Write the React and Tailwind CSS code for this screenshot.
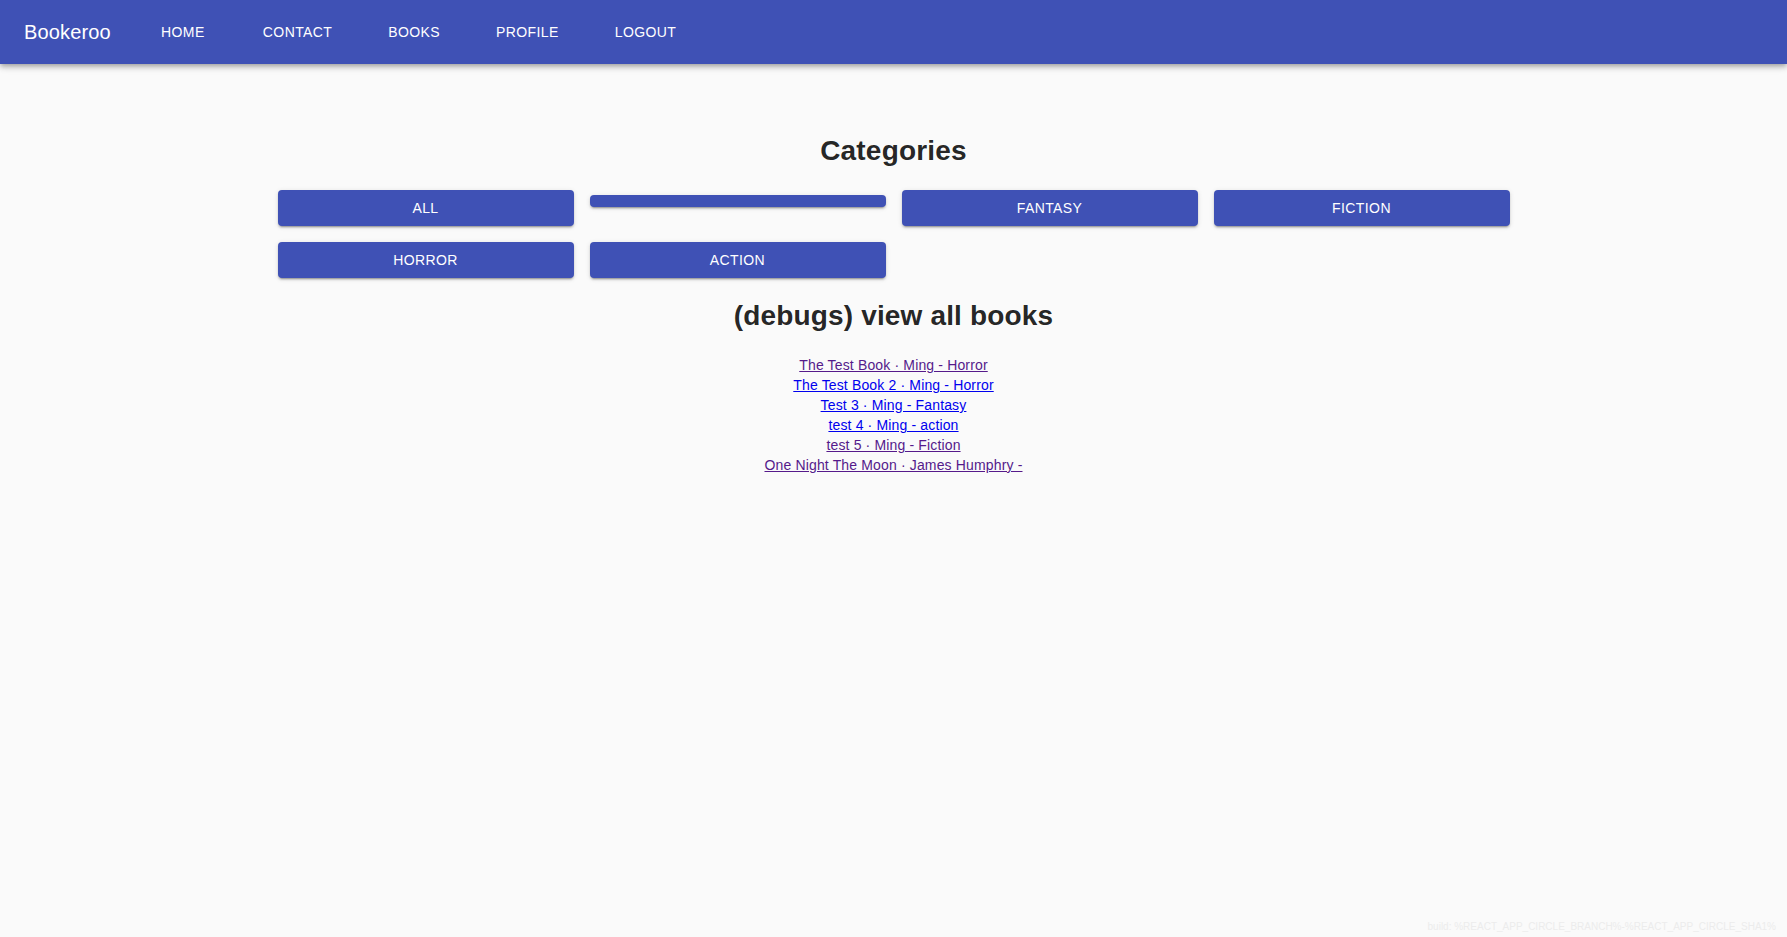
import React from "react";

const navItems = ["Home", "Contact", "Books", "Profile", "Logout"];

const categories = [
  { label: "All" },
  { label: "" },
  { label: "Fantasy" },
  { label: "Fiction" },
  { label: "Horror" },
  { label: "Action" },
];

const books = [
  { text: "The Test Book · Ming - Horror", visited: true },
  { text: "The Test Book 2 · Ming - Horror", visited: false },
  { text: "Test 3 · Ming - Fantasy", visited: false },
  { text: "test 4 · Ming - action", visited: false },
  { text: "test 5 · Ming - Fiction", visited: true },
  { text: "One Night The Moon · James Humphry -", visited: true },
];

export default function App() {
  return (
    <div className="relative min-h-screen bg-[#fafafa] font-['Liberation_Sans',Arial,sans-serif] text-[rgba(0,0,0,0.87)]">
      <header className="relative z-10 flex h-16 items-center bg-[#3f51b5] px-6 text-white shadow-[0px_2px_4px_-1px_rgba(0,0,0,0.2),0px_4px_5px_0px_rgba(0,0,0,0.14),0px_1px_10px_0px_rgba(0,0,0,0.12)]">
        <span className="text-[20px] leading-[32px] tracking-[0.0075em]">Bookeroo</span>
        <nav className="ml-[40px] flex gap-[40px]">
          {navItems.map((item) => (
            <a
              key={item}
              href="#"
              className="min-w-[64px] px-2 text-center text-[14px] uppercase leading-[36px] tracking-[0.02857em] text-white"
            >
              {item}
            </a>
          ))}
        </nav>
      </header>

      <main className="mx-auto max-w-[1280px] px-6">
        <h2 className="mt-[71px] text-center text-[28px] font-bold leading-[32px] tracking-[0.2px]">
          Categories
        </h2>

        <div className="mt-[23px] grid grid-cols-4 gap-4">
          {categories.map((c, i) =>
            c.label ? (
              <button
                key={i}
                className="flex h-9 items-center justify-center rounded bg-[#3f51b5] text-[14px] uppercase tracking-[0.02857em] text-white shadow-[0px_3px_1px_-2px_rgba(0,0,0,0.2),0px_2px_2px_0px_rgba(0,0,0,0.14),0px_1px_5px_0px_rgba(0,0,0,0.12)]"
              >
                {c.label}
              </button>
            ) : (
              <button
                key={i}
                className="mt-[5px] h-[12px] self-start rounded bg-[#3f51b5] shadow-[0px_3px_1px_-2px_rgba(0,0,0,0.2),0px_2px_2px_0px_rgba(0,0,0,0.14),0px_1px_5px_0px_rgba(0,0,0,0.12)]"
              />
            )
          )}
        </div>

        <h2 className="mt-[22px] text-center text-[28px] font-bold leading-[32px] tracking-[0.15px]">
          (debugs) view all books
        </h2>

        <div className="mt-[23px] flex flex-col items-center text-[14px] leading-[20px] tracking-[0.01071em]">
          {books.map((b) => (
            <a
              key={b.text}
              href="#"
              className={
                b.visited
                  ? "text-[#551a8b] underline"
                  : "text-[#0000ee] underline"
              }
            >
              {b.text}
            </a>
          ))}
        </div>
      </main>

      <div className="absolute bottom-[4px] right-[11px] text-[10px] leading-[12px] text-[#ececec]">
        build: %REACT_APP_CIRCLE_BRANCH%-%REACT_APP_CIRCLE_SHA1%
      </div>
    </div>
  );
}
